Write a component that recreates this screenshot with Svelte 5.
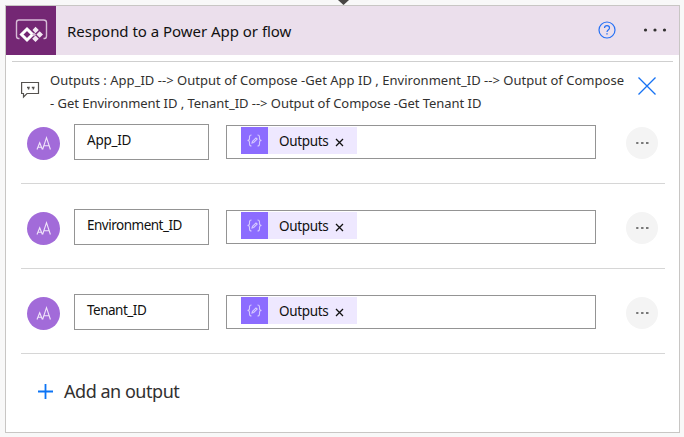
<script>
  const outputs = ['App_ID', 'Environment_ID', 'Tenant_ID'];
</script>

<main>
  <svg class="arrow" width="12" height="6" viewBox="0 0 12 6"><path d="M0 0H11L5.500 5Z" fill="#484644" /></svg>
  <section class="card">
    <header>
      <div class="logo">
        <svg width="50" height="49" viewBox="0 0 50 49" fill="none">
          <path d="M13.500 32.500H12.500Q10.500 32.500 10.500 30V16.500Q10.500 14 13 14H37.500Q40.500 14 40.500 16.500V30Q40.500 32.500 38.500 32.500H37.500" stroke="#d6bcd6" stroke-width="1.400" />
          <path d="M21 23L26.500 28.500L21 34L15.500 28.500Z" stroke="#fff" stroke-width="3" />
          <path d="M29.500 20.700L32.800 24L29.500 27.300L26.500 24Z M33.700 25.200L37 28.500L33.700 31.800L30.400 28.500Z M29.500 29.500L32.800 32.800L29.500 36.100L26.200 32.800Z" fill="#f3e9f3" />
          <path d="M26 28.500L28 26.500L30 28.500L28 30.500Z" fill="#d6bcd6" />
        </svg>
      </div>
      <h1>Respond to a Power App or flow</h1>
      <svg class="help" width="18" height="18" viewBox="0 0 18 18" fill="none" stroke="#2470f5">
        <circle cx="9" cy="9" r="8" stroke-width="1.200" />
        <path d="M6.500 7Q6.500 4.700 9 4.700Q11.500 4.700 11.500 6.900Q11.500 8 10.200 9Q9 9.900 9 11" stroke-width="1.200" />
        <path d="M9 12.300V13.600" stroke-width="1.400" />
      </svg>
      <svg class="dots" width="24" height="4" viewBox="0 0 24 4" fill="#323130"><circle cx="2.500" cy="2" r="1.600" /><circle cx="12" cy="2" r="1.600" /><circle cx="21.500" cy="2" r="1.600" /></svg>
    </header>
    <div class="comment">
      <svg class="bubble" width="19" height="18" viewBox="0 0 19 18" fill="none" stroke="#55524f">
        <path d="M.6 1.500H17.500V12.500H6L2.500 16V12.500H.6Z" stroke-width="1.200" />
        <path d="M6 6.500H8L7.400 8.500M10.800 6.500H12.800L12.200 8.500" stroke-width="1.400" />
      </svg>
      <p>
        <span class="l1">Outputs : App_ID --&gt; Output of Compose -Get App ID , Environment_ID --&gt; Output of Compose</span>
        <span class="l2">- Get Environment ID , Tenant_ID --&gt; Output of Compose -Get Tenant ID</span>
      </p>
      <svg class="close" width="18" height="18" viewBox="0 0 18 18"><path d="M.5 .5L17.500 17.500M17.500 .5L.5 17.500" stroke="#1672f3" stroke-width="1.300" /></svg>
    </div>
    <div class="rows">
      {#each outputs as name}
        <div class="row">
          <svg class="type" width="33" height="33" viewBox="0 0 33 33" fill="none">
            <circle cx="16.500" cy="16.500" r="16.500" fill="#a26bd9" />
            <path d="M10 22.500L12.700 15.700L15.400 22.500M11 20.300H14.500M15.600 22.500L19.500 10.700L23.400 22.500M17 18.700H22" stroke="#f1e6fa" stroke-width="1.100" />
          </svg>
          <div class="name"><span class:tight={name.length > 6}>{name}</span></div>
          <div class="value">
            <div class="token">
              <div class="glyph">
                <svg width="27" height="27" viewBox="0 0 27 27" fill="none" stroke="#d5c8ff" stroke-width="1.100">
                  <path d="M10.500 8Q8.500 8 8.500 10V11.500Q8.500 13.500 6.500 13.500Q8.500 13.500 8.500 15.500V17Q8.500 19 10.500 19M16.500 8Q18.500 8 18.500 10V11.500Q18.500 13.500 20.500 13.500Q18.500 13.500 18.500 15.500V17Q18.500 19 16.500 19" />
                  <path d="M11 16L11.500 14.300L15 10.900L16.200 12L12.700 15.500Z" />
                </svg>
              </div>
              <span>Outputs</span>
              <svg class="x" width="9" height="9" viewBox="0 0 9 9"><path d="M1 1L8 8M8 1L1 8" stroke="#111" stroke-width="1.300" /></svg>
            </div>
          </div>
          <svg class="more" width="32" height="32" viewBox="0 0 32 32">
            <circle cx="16" cy="16" r="16" fill="#f4f4f4" />
            <path d="M10.200 16H12.400M15.100 16H17.500M20 16H22.500" stroke="#777" stroke-width="2" />
          </svg>
        </div>
      {/each}
    </div>
    <div class="add">
      <svg width="15" height="15" viewBox="0 0 15 15"><path d="M0 7.500H15M7.500 0V15" stroke="#0c74f5" stroke-width="1.800" /></svg>
      <span>Add an output</span>
    </div>
  </section>
</main>

<style>
  main {
    box-sizing: border-box;
    width: 684px;
    height: 437px;
    padding: 5px 4px 4px 5px;
    background: #f8f8f8;
    font-family: 'Noto Sans', 'Open Sans', sans-serif;
    color: #323130;
    position: relative;
    overflow: hidden;
  }
  .arrow { position: absolute; left: 338px; top: 0; }
  svg { display: block; flex: none; }
  .card {
    box-sizing: border-box;
    height: 428px;
    border: 1px solid #c8c6c4;
    background: #fff;
  }
  header {
    display: flex;
    align-items: center;
    height: 49px;
    background: #ebdfec;
  }
  .logo { width: 50px; height: 49px; background: #742774; }
  h1 {
    margin: 0 0 0 11px;
    font-size: 15px;
    font-weight: 400;
    line-height: 20px;
    letter-spacing: -0.03px;
    color: #111;
    width: 531px;
    white-space: nowrap;
  }
  .help { margin-top: -1px; }
  .dots { margin-left: 27px; margin-top: -1px; }
  .comment {
    display: flex;
    align-items: flex-start;
    height: 46px;
    margin: 6px 6px 0;
    padding: 7px 17px 0 9px;
    border-top: 1px solid #cfcfcf;
  }
  .bubble { margin-top: 12px; }
  p { margin: 0 0 0 10px; width: 588px; font-size: 13px; line-height: 23px; }
  p span { display: block; white-space: nowrap; }
  .l1 { letter-spacing: 0.02px; }
  .l2 { letter-spacing: -0.04px; }
  .close { margin-top: 8px; }
  .rows { margin: 9px 14px 0 15px; display: flex; flex-direction: column; gap: 25px; }
  .row {
    display: flex;
    height: 36px;
    padding: 0 7px 23px 6px;
    border-bottom: 1px solid #d6d6d6;
  }
  .type { margin-top: 3px; }
  .name {
    box-sizing: border-box;
    width: 135px;
    height: 36px;
    margin-left: 14px;
    padding-left: 12px;
    border: 1px solid #949494;
    font-size: 13.5px;
    line-height: 31px;
    color: #111;
    letter-spacing: -0.25px;
  }
  .tight { letter-spacing: -0.5px; }
  .value {
    box-sizing: border-box;
    width: 370px;
    height: 34px;
    margin: 1px 0 0 17px;
    padding: 1px 0 0 14px;
    border: 1px solid #949494;
  }
  .token { display: flex; align-items: center; width: 116px; height: 27px; background: #eee8ff; }
  .glyph { width: 27px; height: 27px; background: #8c6cff; }
  .token span {
    width: 55px;
    margin-left: 11px;
    font-size: 13.5px;
    line-height: 27px;
    letter-spacing: -0.35px;
    color: #111;
    padding-top: 1px;
  }
  .x { margin-top: 3px; margin-left: 1px; }
  .more { margin: 3px 0 0 30px; }
  .add { display: flex; align-items: center; height: 24px; margin: 25px 0 0 32px; }
  .add span { margin-left: 11px; font-size: 18px; line-height: 24px; letter-spacing: -0.47px; }
</style>
